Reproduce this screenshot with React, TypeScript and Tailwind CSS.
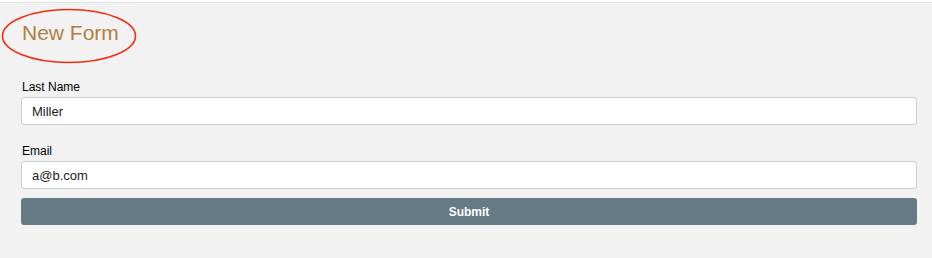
export default function App() {
  return (
    <div className="bg-white pt-[2px] w-[932px] h-[258px]" style={{ fontFamily: '"Liberation Sans", Arial, sans-serif' }}>
      <div className="h-[256px] bg-[#f2f2f2] border-t border-[#e2e2e2] pl-[21px] pr-[15px]">
        <div className="relative h-[77px] pt-[18px]">
          <h1 className="pl-px text-[21px] leading-[24px] text-[#b27d41]">New Form</h1>
          <svg className="absolute left-[-20px] top-[5px]" width="136" height="56" viewBox="0 0 136 56">
            <ellipse cx="68" cy="28" rx="66.5" ry="26.5" fill="none" stroke="#f82a0c" strokeWidth="1.6" />
          </svg>
        </div>
        <form className="flex flex-col" onSubmit={(e) => e.preventDefault()}>
          <label className="block text-[12px] leading-[14px] text-black mb-[19px]">
            <span className="block pl-px mb-[3px]">Last Name</span>
            <input
              defaultValue="Miller"
              className="block w-full h-[28px] px-[10px] bg-white border border-[#c9ced6] rounded-[3px] text-[13px] text-[#222] outline-none"
            />
          </label>
          <label className="block text-[12px] leading-[14px] text-black mb-[9px]">
            <span className="block pl-px mb-[3px]">Email</span>
            <input
              defaultValue="a@b.com"
              className="block w-full h-[28px] px-[10px] bg-white border border-[#c9ced6] rounded-[3px] text-[13px] text-[#222] outline-none"
            />
          </label>
          <button type="submit" className="h-[27px] w-full rounded-[3px] bg-[#647a85] text-white text-[12px] font-bold">
            Submit
          </button>
        </form>
      </div>
    </div>
  );
}
